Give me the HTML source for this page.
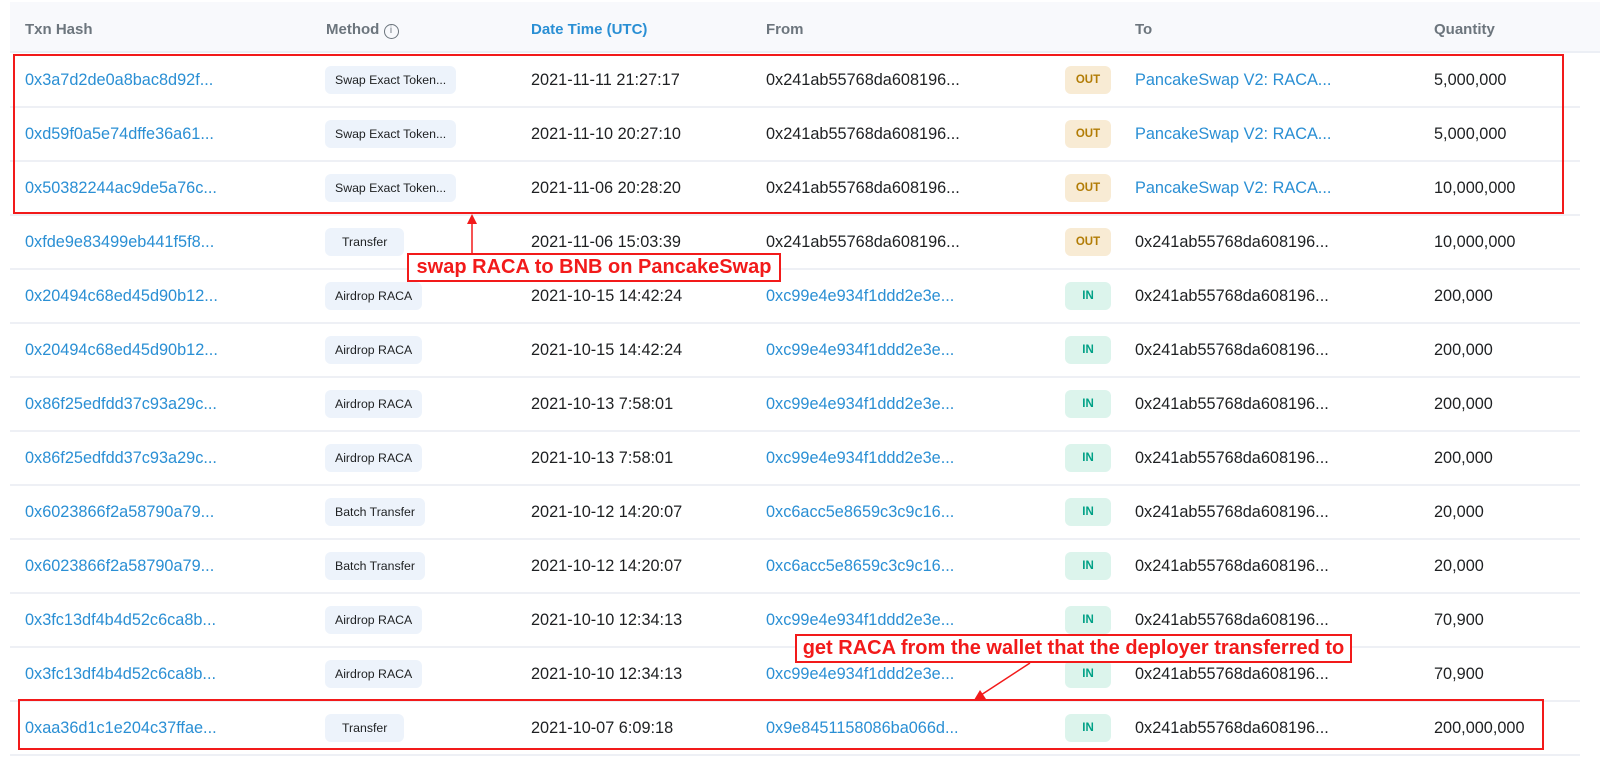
<!DOCTYPE html>
<html><head><meta charset="utf-8"><style>
*{margin:0;padding:0;box-sizing:border-box}
body{width:1600px;height:762px;background:#fff;font-family:"Liberation Sans",Arial,sans-serif;position:relative;overflow:hidden;color:#1e2022}
.hdr{position:absolute;left:10px;top:2px;width:1590px;height:51px;background:#f8f9fc;border-bottom:2px solid #eceff5}
.h{position:absolute;top:19px;font-size:15px;font-weight:bold;color:#6c757d}
.row{position:absolute;left:10px;width:1570px;height:54px;border-bottom:2px solid #eef0f5}
.c{position:absolute;top:0;height:52px;line-height:52px;font-size:16.3px;white-space:nowrap}
.lk{color:#2a8fd4}
.m{position:absolute;top:12px;height:28px;line-height:28px;padding:0 10px;background:#edf3fb;border-radius:6px;font-size:12.3px;color:#1e2022}
.b{position:absolute;top:12px;height:28px;line-height:28px;width:46px;text-align:center;border-radius:6px;font-size:11.5px;font-weight:bold}
.out{background:#f8ebd4;color:#b27c05}
.in{background:#dcf4ec;color:#00a186}
.box{position:absolute;border:2px solid #f21a1a}
.ann{position:absolute;border:2px solid #f21a1a;background:#fff;color:#f21a1a;font-weight:bold;font-size:20px;text-align:center;line-height:25px;white-space:nowrap}
</style></head><body>
<div class="hdr">
<div class="h" style="left:15px">Txn Hash</div>
<div class="h" style="left:316px">Method <span style="display:inline-block;width:15px;height:15px;border:1.3px solid #6c757d;border-radius:50%;font-size:10px;line-height:12px;text-align:center;font-weight:normal;vertical-align:1px">i</span></div>
<div class="h" style="left:521px;color:#2a8fd4">Date Time (UTC)</div>
<div class="h" style="left:756px">From</div>
<div class="h" style="left:1125px">To</div>
<div class="h" style="left:1424px">Quantity</div>
</div>

<div class="row" style="top:54px"><div class="c lk" style="left:15px">0x3a7d2de0a8bac8d92f...</div><div class="m" style="left:315px">Swap Exact Token...</div><div class="c" style="left:521px">2021-11-11 21:27:17</div><div class="c" style="left:756px">0x241ab55768da608196...</div><div class="b out" style="left:1055px">OUT</div><div class="c lk" style="left:1125px">PancakeSwap V2: RACA...</div><div class="c" style="left:1424px">5,000,000</div></div>
<div class="row" style="top:108px"><div class="c lk" style="left:15px">0xd59f0a5e74dffe36a61...</div><div class="m" style="left:315px">Swap Exact Token...</div><div class="c" style="left:521px">2021-11-10 20:27:10</div><div class="c" style="left:756px">0x241ab55768da608196...</div><div class="b out" style="left:1055px">OUT</div><div class="c lk" style="left:1125px">PancakeSwap V2: RACA...</div><div class="c" style="left:1424px">5,000,000</div></div>
<div class="row" style="top:162px"><div class="c lk" style="left:15px">0x50382244ac9de5a76c...</div><div class="m" style="left:315px">Swap Exact Token...</div><div class="c" style="left:521px">2021-11-06 20:28:20</div><div class="c" style="left:756px">0x241ab55768da608196...</div><div class="b out" style="left:1055px">OUT</div><div class="c lk" style="left:1125px">PancakeSwap V2: RACA...</div><div class="c" style="left:1424px">10,000,000</div></div>
<div class="row" style="top:216px"><div class="c lk" style="left:15px">0xfde9e83499eb441f5f8...</div><div class="m" style="left:315px;padding:0 17px">Transfer</div><div class="c" style="left:521px">2021-11-06 15:03:39</div><div class="c" style="left:756px">0x241ab55768da608196...</div><div class="b out" style="left:1055px">OUT</div><div class="c" style="left:1125px">0x241ab55768da608196...</div><div class="c" style="left:1424px">10,000,000</div></div>
<div class="row" style="top:270px"><div class="c lk" style="left:15px">0x20494c68ed45d90b12...</div><div class="m" style="left:315px">Airdrop RACA</div><div class="c" style="left:521px">2021-10-15 14:42:24</div><div class="c lk" style="left:756px">0xc99e4e934f1ddd2e3e...</div><div class="b in" style="left:1055px">IN</div><div class="c" style="left:1125px">0x241ab55768da608196...</div><div class="c" style="left:1424px">200,000</div></div>
<div class="row" style="top:324px"><div class="c lk" style="left:15px">0x20494c68ed45d90b12...</div><div class="m" style="left:315px">Airdrop RACA</div><div class="c" style="left:521px">2021-10-15 14:42:24</div><div class="c lk" style="left:756px">0xc99e4e934f1ddd2e3e...</div><div class="b in" style="left:1055px">IN</div><div class="c" style="left:1125px">0x241ab55768da608196...</div><div class="c" style="left:1424px">200,000</div></div>
<div class="row" style="top:378px"><div class="c lk" style="left:15px">0x86f25edfdd37c93a29c...</div><div class="m" style="left:315px">Airdrop RACA</div><div class="c" style="left:521px">2021-10-13 7:58:01</div><div class="c lk" style="left:756px">0xc99e4e934f1ddd2e3e...</div><div class="b in" style="left:1055px">IN</div><div class="c" style="left:1125px">0x241ab55768da608196...</div><div class="c" style="left:1424px">200,000</div></div>
<div class="row" style="top:432px"><div class="c lk" style="left:15px">0x86f25edfdd37c93a29c...</div><div class="m" style="left:315px">Airdrop RACA</div><div class="c" style="left:521px">2021-10-13 7:58:01</div><div class="c lk" style="left:756px">0xc99e4e934f1ddd2e3e...</div><div class="b in" style="left:1055px">IN</div><div class="c" style="left:1125px">0x241ab55768da608196...</div><div class="c" style="left:1424px">200,000</div></div>
<div class="row" style="top:486px"><div class="c lk" style="left:15px">0x6023866f2a58790a79...</div><div class="m" style="left:315px">Batch Transfer</div><div class="c" style="left:521px">2021-10-12 14:20:07</div><div class="c lk" style="left:756px">0xc6acc5e8659c3c9c16...</div><div class="b in" style="left:1055px">IN</div><div class="c" style="left:1125px">0x241ab55768da608196...</div><div class="c" style="left:1424px">20,000</div></div>
<div class="row" style="top:540px"><div class="c lk" style="left:15px">0x6023866f2a58790a79...</div><div class="m" style="left:315px">Batch Transfer</div><div class="c" style="left:521px">2021-10-12 14:20:07</div><div class="c lk" style="left:756px">0xc6acc5e8659c3c9c16...</div><div class="b in" style="left:1055px">IN</div><div class="c" style="left:1125px">0x241ab55768da608196...</div><div class="c" style="left:1424px">20,000</div></div>
<div class="row" style="top:594px"><div class="c lk" style="left:15px">0x3fc13df4b4d52c6ca8b...</div><div class="m" style="left:315px">Airdrop RACA</div><div class="c" style="left:521px">2021-10-10 12:34:13</div><div class="c lk" style="left:756px">0xc99e4e934f1ddd2e3e...</div><div class="b in" style="left:1055px">IN</div><div class="c" style="left:1125px">0x241ab55768da608196...</div><div class="c" style="left:1424px">70,900</div></div>
<div class="row" style="top:648px"><div class="c lk" style="left:15px">0x3fc13df4b4d52c6ca8b...</div><div class="m" style="left:315px">Airdrop RACA</div><div class="c" style="left:521px">2021-10-10 12:34:13</div><div class="c lk" style="left:756px">0xc99e4e934f1ddd2e3e...</div><div class="b in" style="left:1055px">IN</div><div class="c" style="left:1125px">0x241ab55768da608196...</div><div class="c" style="left:1424px">70,900</div></div>
<div class="row" style="top:702px"><div class="c lk" style="left:15px">0xaa36d1c1e204c37ffae...</div><div class="m" style="left:315px;padding:0 17px">Transfer</div><div class="c" style="left:521px">2021-10-07 6:09:18</div><div class="c lk" style="left:756px">0x9e8451158086ba066d...</div><div class="b in" style="left:1055px">IN</div><div class="c" style="left:1125px">0x241ab55768da608196...</div><div class="c" style="left:1424px">200,000,000</div></div>

<div class="box" style="left:13px;top:54px;width:1551px;height:160px"></div>
<div class="box" style="left:18px;top:699px;width:1526px;height:51px"></div>

<svg style="position:absolute;left:0;top:0" width="1600" height="762">
<line x1="472" y1="253" x2="472" y2="222" stroke="#f21a1a" stroke-width="1.5"/>
<polygon points="472,214 467,224 477,224" fill="#f21a1a"/>
<line x1="1030" y1="663" x2="981" y2="695" stroke="#f21a1a" stroke-width="1.5"/>
<polygon points="974,700 980,690 986,699" fill="#f21a1a"/>
</svg>
<div class="ann" style="left:407px;top:253px;width:374px;height:29px">swap RACA to BNB on PancakeSwap</div>
<div class="ann" style="left:795px;top:634px;width:557px;height:29px">get RACA from the wallet that the deployer transferred to</div>
</body></html>
